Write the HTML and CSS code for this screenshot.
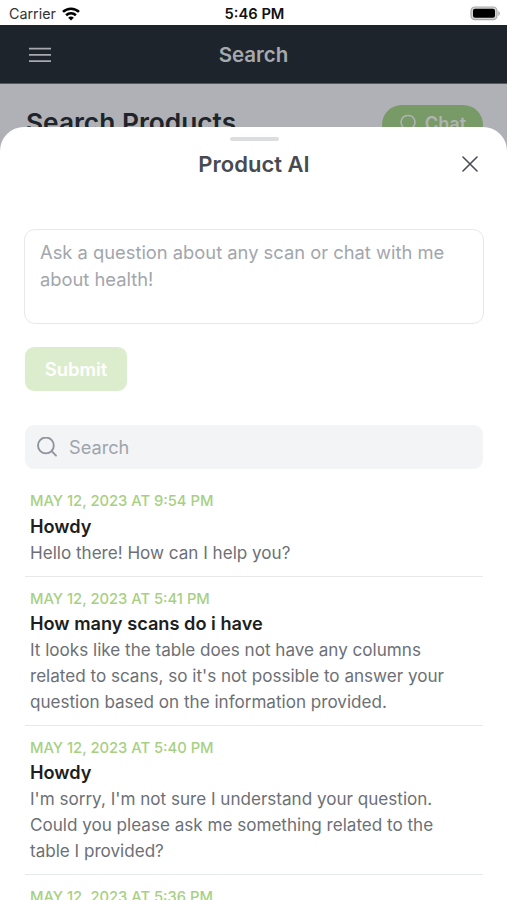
FILE: index.html
```html
<!DOCTYPE html>
<html lang="en">
<head>
<meta charset="utf-8">
<title>Product AI</title>
<link rel="stylesheet" href="styles.css">
</head>
<body>
<div class="phone">
  <div class="status">
    <div class="carrier"><span>Carrier</span>
      <svg width="18" height="14" viewBox="0 0 18 14" fill="none" stroke="#000" stroke-width="2.6"><path d="M1 4.9C5.5.6 12.5.6 17 4.9M4.1 8.2c2.8-2.6 7-2.6 9.8 0"/><path d="M9 13.6 6.2 10.7c1.6-1.5 4-1.5 5.6 0z" fill="#000" stroke="none"/></svg>
    </div>
    <div class="time">5:46 PM</div>
    <svg class="battery" width="31" height="15" viewBox="0 0 31 15"><rect x="2" y="1" width="26" height="12.600" rx="3.800" fill="#d5d5d5" stroke="#aaa" stroke-width="1.200"/><rect x="4" y="2.800" width="22" height="9" rx="2" fill="#000"/><path d="M29.300 5c2 1 2 4 0 5z" fill="#aaa"/></svg>
  </div>
  <header class="navbar">
    <svg class="menu" width="22" height="16" viewBox="0 0 22 16" stroke="#a6a9ae" stroke-width="1.8"><path d="M0 1.6h22M0 7.8h22M0 14.1h22"/></svg>
    <div class="nav-title">Search</div>
  </header>
  <main class="page">
    <h1>Search Products</h1>
    <div class="chat">
      <svg width="18" height="18" viewBox="0 0 18 18" fill="none" stroke="#b0b3b6" stroke-width="1.6"><path d="M4.8 14.2C-.2 9.400 2.200 1.500 9 1.500c7 0 9.300 8 4.200 12.600C11 15.500 8 15 4.800 16.500z"/></svg>
      <span>Chat</span>
    </div>
  </main>
  <section class="sheet">
    <div class="grabber"></div>
    <div class="sheet-head">
      <h2>Product AI</h2>
      <svg class="close" width="16" height="16" viewBox="0 0 16 16" fill="none" stroke="#4b4f55" stroke-width="1.6" stroke-linecap="round"><path d="m1 1 14 14M15 1 1 15"/></svg>
    </div>
    <div class="question">Ask a question about any scan or chat with me<br>about health!</div>
    <div class="submit"><span>Submit</span></div>
    <div class="search">
      <svg width="21" height="21" viewBox="0 0 21 21" fill="none" stroke="#8f959e" stroke-width="1.900" stroke-linecap="round"><circle cx="8.900" cy="8.500" r="7.900"/><path d="m14.600 14.200 4.400 4.400"/></svg>
      <span>Search</span>
    </div>
    <div class="history">
      <article><div class="date">MAY 12, 2023 AT 9:54 PM</div><h3>Howdy</h3><p>Hello there! How can I help you?</p></article>
      <article><div class="date">MAY 12, 2023 AT 5:41 PM</div><h3>How many scans do i have</h3><p>It looks like the table does not have any columns<br>related to scans, so it's not possible to answer your<br>question based on the information provided.</p></article>
      <article><div class="date">MAY 12, 2023 AT 5:40 PM</div><h3>Howdy</h3><p>I'm sorry, I'm not sure I understand your question.<br>Could you please ask me something related to the<br>table I provided?</p></article>
      <article><div class="date">MAY 12, 2023 AT 5:36 PM</div></article>
    </div>
  </section>
</div>
</body>
</html>
```
FILE: styles.css
```css
* { box-sizing: border-box; }
body { margin: 0; font-family: Inter, "Liberation Sans", sans-serif; }
h1, h2, h3, p { margin: 0; }
svg { display: block; flex: none; }
.phone { position: relative; width: 507px; height: 900px; overflow: hidden; background: #fff; white-space: nowrap; }
.status { height: 25px; display: grid; grid-template-columns: 1fr auto 1fr; align-items: center; padding: 2px 7px 0 9px; color: #111; }
.carrier { display: flex; align-items: center; gap: 6px; font-size: 14.300px; color: #333; }
.time { font-size: 14.700px; font-weight: 600; }
.battery { justify-self: end; }
.navbar { height: 59px; background: #1e242c; border-bottom: 1px solid #555a61; display: grid; grid-template-columns: 1fr auto 1fr; align-items: center; padding: 1px 29px 0; }
.nav-title { font-size: 20.500px; font-weight: 600; color: #a6a9ae; }
.page { height: 90px; background: #b0b1b6; display: flex; justify-content: space-between; align-items: flex-start; padding: 21px 24px 0 26px; }
h1 { font-size: 26.300px; line-height: 36px; font-weight: 600; color: #1e242c; }
.chat { width: 101px; height: 40px; border-radius: 20px; background: #789a66; color: #b0b3b6; font-size: 18.200px; font-weight: 600; display: flex; align-items: center; justify-content: center; gap: 8px; padding-bottom: 5px; }
.sheet { position: absolute; inset: 127px 0 0; background: #fff; border-radius: 24px 24px 0 0; padding: 10px 24px 0 25px; display: flex; flex-direction: column; overflow: hidden; }
.sheet > * { flex: none; }
.grabber { width: 49px; height: 4px; border-radius: 2px; background: #dcdddf; align-self: center; }
.sheet-head { height: 46px; display: grid; grid-template-columns: 1fr auto 1fr; align-items: center; }
h2 { grid-column: 2; font-size: 22px; font-weight: 600; color: #474b51; }
.close { justify-self: end; margin-right: 5px; }
.question { margin: 42px -1px 0; height: 95px; border: 1px solid #e7e8ea; border-radius: 11px; padding: 9px 15px; font-size: 18.330px; line-height: 27px; color: #a2a6ad; }
.submit { margin-top: 23px; width: 102px; height: 44px; border-radius: 9px; background: #dcedcd; color: #fff; font-size: 18.400px; font-weight: 600; display: flex; align-items: center; justify-content: center; }
.search { margin-top: 34px; height: 44px; border-radius: 9px; background: #f2f4f6; display: flex; align-items: center; gap: 11px; padding-left: 12px; font-size: 18.200px; color: #a0a4ab; }
article { border-bottom: 1px solid #e7e8ea; padding: 10.250px 5px 10.250px; line-height: 25.750px; }
.history { padding-top: 10.200px; }
.date { font-size: 14.740px; line-height: 24.500px; font-weight: 500; color: #a7d083; }
h3 { font-size: 18.200px; font-weight: 600; line-height: inherit; color: #1c1e21; }
p { font-size: 17.080px; color: #6c7076; }
```
